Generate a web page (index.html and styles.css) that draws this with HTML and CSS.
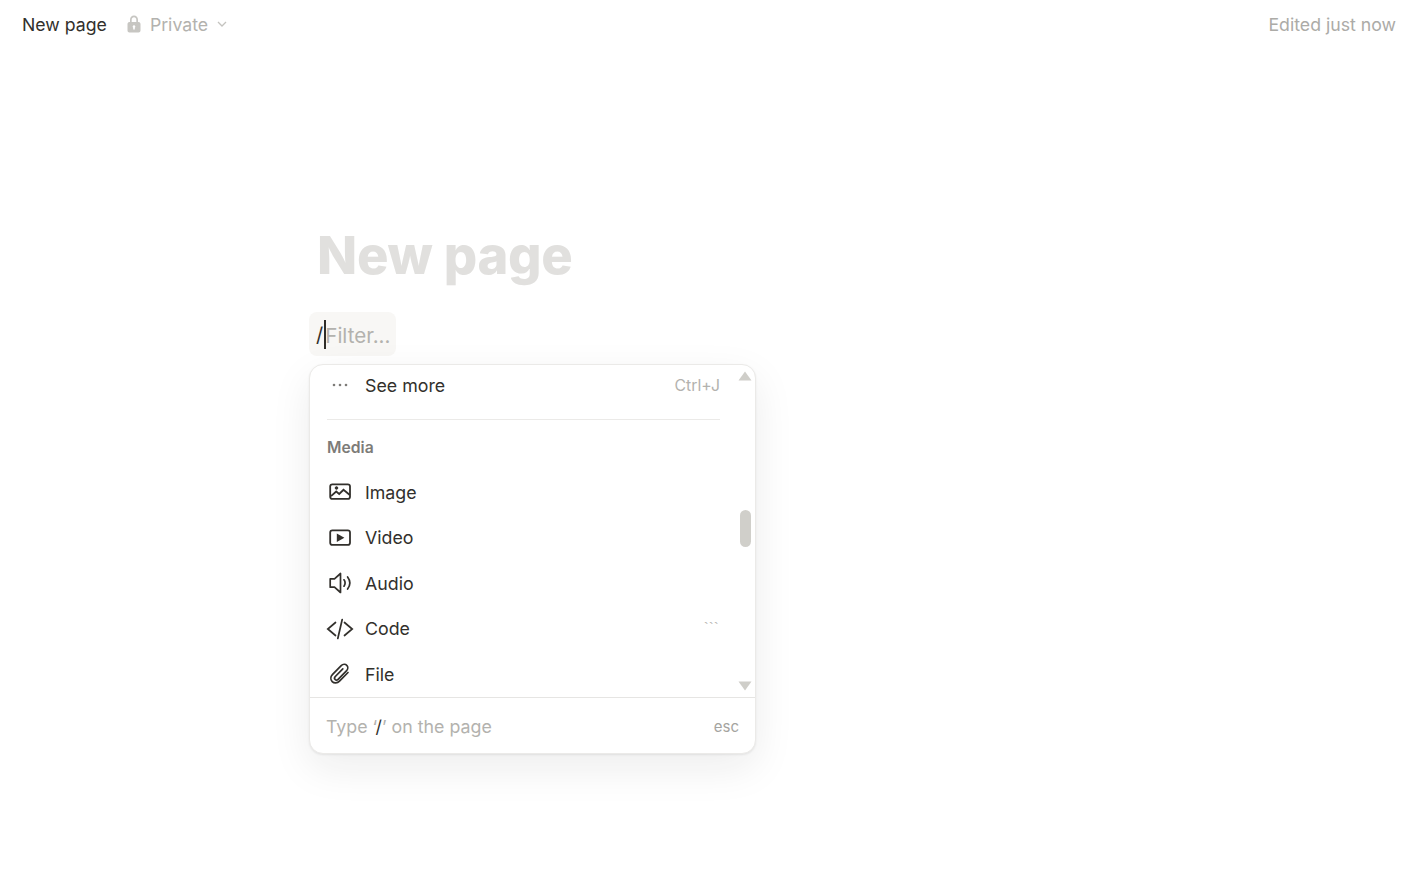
FILE: index.html
```html
<!DOCTYPE html>
<html lang="en">
<head>
<meta charset="utf-8">
<title>New page</title>
<link rel="stylesheet" href="styles.css">
</head>
<body>
<header class="topbar">
  <div class="crumbs">
    <span class="crumb-title">New page</span>
    <span class="privacy">
      <svg class="lock" viewBox="0 0 16 18" width="16" height="18"><path fill="#c7c6c2" fill-rule="evenodd" d="M8 .5C5.600.5 4 2.300 4 4.700v2.300H3.400C2.400 7 1.500 7.800 1.500 9v6.500c0 1 .9 2 1.900 2h9.200c1 0 1.900-1 1.900-2V9c0-1.200-.9-2-1.900-2H12V4.700C12 2.300 10.400.5 8 .5zM5.700 7V4.700C5.700 3.200 6.600 2.200 8 2.200s2.300 1 2.300 2.500V7zM8 10.300a1.400 1.400 0 0 1 .8 2.500v1.700H7.200v-1.700A1.400 1.400 0 0 1 8 10.300z"/></svg>
      <span class="privacy-label">Private</span>
      <svg class="chev" viewBox="0 0 10 6" width="10" height="6"><path d="M1 1l4 4 4-4" fill="none" stroke="#c4c3bf" stroke-width="1.300"/></svg>
    </span>
  </div>
  <span class="edited">Edited just now</span>
</header>

<main class="page">
  <h1 class="title">New page</h1>
  <div class="slash-row">
    <span class="slash-chip"><span class="slash">/</span><span class="caret"></span><span class="filter">Filter...</span></span>
  </div>
</main>

<section class="menu">
  <div class="menu-scroll">
    <div class="item item-more">
      <span class="icon"><svg viewBox="0 0 28 28" width="28" height="28"><g fill="#7d7c78"><circle cx="8" cy="14" r="1.300"/><circle cx="14" cy="14" r="1.300"/><circle cx="20" cy="14" r="1.300"/></g></svg></span>
      <span class="label">See more</span>
      <span class="hint">Ctrl+J</span>
    </div>
    <div class="divider"></div>
    <div class="group">Media</div>
    <div class="item">
      <span class="icon"><svg viewBox="0 0 28 28" width="28" height="28" fill="none" stroke="#32302c" stroke-width="1.800"><rect x="4.200" y="6.400" width="19.800" height="14.500" rx="2.200"/><path d="M5 18.200l5.200-4.700 3 2.500 4.300-4.200L23.800 17"/><circle cx="10.500" cy="10" r="1.300" fill="#32302c" stroke-width="1"/></svg></span>
      <span class="label">Image</span>
    </div>
    <div class="item">
      <span class="icon"><svg viewBox="0 0 28 28" width="28" height="28" fill="none" stroke="#32302c" stroke-width="1.800"><rect x="4.200" y="6.400" width="19.800" height="14.500" rx="2.200"/><path d="M10.800 9.500l7.600 4.200-7.600 4.200z" fill="#32302c" stroke="none"/></svg></span>
      <span class="label">Video</span>
    </div>
    <div class="item">
      <span class="icon"><svg viewBox="0 0 28 28" width="28" height="28" fill="none" stroke="#32302c" stroke-width="1.700"><path d="M4.200 9.800h4.300l6-5.300v19l-6-5.300H4.200z" stroke-linejoin="round"/><path d="M18 10.800c1.400 2 1.400 4.400 0 6.400M21.600 8c2.800 3.700 2.800 8.300 0 12" stroke-linecap="round"/></svg></span>
      <span class="label">Audio</span>
    </div>
    <div class="item">
      <span class="icon"><svg viewBox="0 0 28 28" width="28" height="28" fill="none" stroke="#32302c" stroke-width="1.700" stroke-linecap="round"><path d="M9.500 7.500L1.800 14l7.700 6.500M18.500 7.500l7.700 6.500-7.700 6.500M16.200 4.500l-4.400 19"/></svg></span>
      <span class="label">Code</span>
      <span class="hint hint-code">```</span>
    </div>
    <div class="item">
      <span class="icon"><svg viewBox="0 0 28 28" width="28" height="28" fill="none" stroke="#32302c" stroke-width="1.700" stroke-linecap="round"><path d="M22 12.500l-8.500 8.700c-2.200 2.200-5.400 2.300-7.300.4-1.900-1.900-1.700-5 .4-7.200l8.600-8.800c1.700-1.700 4.200-1.800 5.600-.3 1.400 1.400 1.300 3.800-.4 5.500l-8.300 8.500c-.9.900-2.200 1-3 .2-.8-.8-.7-2 .2-3l7.500-7.700"/></svg></span>
      <span class="label">File</span>
    </div>
    <svg class="arrow arrow-up" viewBox="0 0 14 10" width="14" height="10"><path d="M7 .500L13.500 9.500H.500z" fill="#cfcec9"/></svg>
    <div class="thumb"></div>
    <svg class="arrow arrow-down" viewBox="0 0 14 10" width="14" height="10"><path d="M7 9.500L13.500 .500H.500z" fill="#cfcec9"/></svg>
  </div>
  <footer class="menu-foot">
    <span class="foot-text">Type ‘<span class="foot-slash">/</span>’ on the page</span>
    <span class="foot-esc">esc</span>
  </footer>
</section>
</body>
</html>
```
FILE: styles.css
```css
* { box-sizing: border-box; }
html, body { height: 100%; }
body {
  margin: 0;
  background: #fff;
  color: #32302c;
  font-family: Inter, "Liberation Sans", sans-serif;
  overflow: hidden;
}
.topbar {
  height: 50px;
  display: flex;
  align-items: center;
  justify-content: space-between;
  padding: 0 14px 0 22px;
  font-size: 17.700px;
  line-height: 24px;
}
.crumbs { display: flex; align-items: center; gap: 19px; }
.crumb-title { color: #32302c; }
.privacy { display: flex; align-items: center; color: #b3b2ae; }
.lock { margin-right: 8px; margin-top: -3px; }
.chev { margin-left: 9px; margin-top: -2px; }
.edited { color: #acaba7; }
.page { padding: 166px 0 0 309px; }
.title {
  margin: 0 0 18px 8px;
  font-size: 52.500px;
  line-height: 78px;
  font-weight: 800;
  letter-spacing: -.3px;
  color: #e1e0de;
}
.slash-row { display: flex; }
.slash-chip {
  display: flex;
  align-items: center;
  height: 44px;
  padding: 2px 6px 0 7px;
  border-radius: 8px;
  background: #f8f7f5;
  font-size: 20.600px;
}
.slash { color: #32302c; font-size: 20px; margin-right: 1px; }
.caret { width: 2px; height: 29px; background: #2f2d29; margin: -2px 0 0 0; }
.filter { color: #b3b2ae; margin-left: -1px; }
.menu {
  position: absolute;
  left: 309px;
  top: 364px;
  width: 447px;
  height: 390px;
  display: flex;
  flex-direction: column;
  border: 1px solid #ebeae8;
  border-radius: 14px;
  background: #fff;
  box-shadow: 0 1px 2px rgba(25, 25, 25, .08), 0 14px 40px rgba(25, 25, 25, .08);
  overflow: hidden;
}
.menu-scroll { position: relative; height: 332px; flex: none; padding: 0 35px 0 16px; overflow: hidden; }
.item { display: flex; align-items: center; height: 45.500px; font-size: 17.800px; color: #32302c; }
.item-more { height: 40px; }
.icon { display: flex; width: 28px; height: 28px; flex: none; margin-right: 11px; }
.label { flex: 1; }
.hint { color: #b3b2ae; font-size: 15.800px; }
.hint-code { font-family: "Liberation Sans", sans-serif; font-size: 14px; line-height: 18px; letter-spacing: .3px; align-self: flex-start; margin: 13px 1px 0 0; }
.divider { height: 1px; background: #ebeae8; margin: 14px 0 0 1px; }
.group { font-size: 15.700px; font-weight: 600; color: #7d7c78; margin: 18px 0 11.700px 1px; line-height: 20px; height: 20px; }
.arrow { position: absolute; right: 3px; }
.arrow-up { top: 6px; }
.arrow-down { top: 316px; }
.thumb { position: absolute; right: 4px; top: 145px; width: 11px; height: 37px; border-radius: 6px; background: #d0cfca; }
.menu-foot {
  height: 56px;
  padding: 2px 16px 0;
  border-top: 1px solid #e6e5e3;
  display: flex;
  align-items: center;
  justify-content: space-between;
  font-size: 17.800px;
  color: #b3b2ae;
}
.foot-slash { color: #32302c; }
.foot-esc { font-size: 15px; color: #a5a4a0; }
```
